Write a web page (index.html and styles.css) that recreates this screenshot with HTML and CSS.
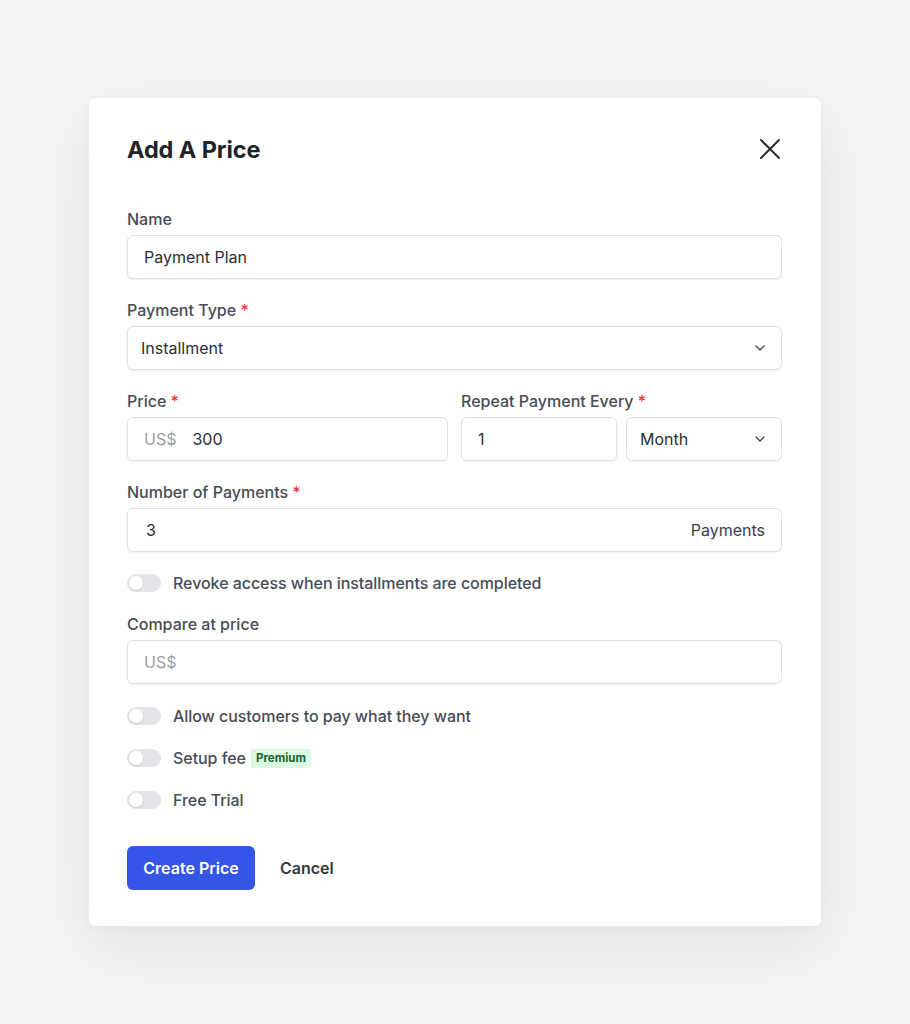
FILE: index.html
```html
<!DOCTYPE html>
<html>
<head>
<meta charset="utf-8">
<link rel="stylesheet" href="styles.css">
</head>
<body>
<div class="page">
  <div class="modal">
    <div class="header">
      <h1 class="title">Add A Price</h1>
      <svg class="close" width="22" height="22" viewBox="0 0 22 22"><path d="M2 2L20 20M20 2L2 20" stroke="#2b2e33" stroke-width="2" stroke-linecap="round"/></svg>
    </div>

    <div class="form">
      <div class="field">
        <label class="label">Name</label>
        <div class="input"><span class="value">Payment Plan</span></div>
      </div>

      <div class="field">
        <label class="label">Payment Type <span class="req">*</span></label>
        <div class="input select"><span class="value sel">Installment</span>
          <svg class="chev" width="10" height="6" viewBox="0 0 10 6"><path d="M1 1L5 5L9 1" fill="none" stroke="#444" stroke-width="1.4" stroke-linecap="round" stroke-linejoin="round"/></svg>
        </div>
      </div>

      <div class="two">
        <div class="field">
          <label class="label">Price <span class="req">*</span></label>
          <div class="input"><span class="prefix">US$</span><span class="value">300</span></div>
        </div>
        <div class="field">
          <label class="label">Repeat Payment Every <span class="req">*</span></label>
          <div class="pair">
            <div class="input"><span class="value">1</span></div>
            <div class="input select"><span class="value sel">Month</span>
              <svg class="chev" width="10" height="6" viewBox="0 0 10 6"><path d="M1 1L5 5L9 1" fill="none" stroke="#444" stroke-width="1.4" stroke-linecap="round" stroke-linejoin="round"/></svg>
            </div>
          </div>
        </div>
      </div>

      <div class="field">
        <label class="label">Number of Payments <span class="req">*</span></label>
        <div class="input spread"><span class="value num">3</span><span class="suffix">Payments</span></div>
      </div>

      <div class="toggle-row first"><span class="toggle"><span class="knob"></span></span><span class="tlabel">Revoke access when installments are completed</span></div>

      <div class="field compare">
        <label class="label">Compare at price</label>
        <div class="input"><span class="prefix">US$</span></div>
      </div>

      <div class="toggles">
        <div class="toggle-row"><span class="toggle"><span class="knob"></span></span><span class="tlabel">Allow customers to pay what they want</span></div>
        <div class="toggle-row"><span class="toggle"><span class="knob"></span></span><span class="tlabel">Setup fee</span><span class="badge">Premium</span></div>
        <div class="toggle-row"><span class="toggle"><span class="knob"></span></span><span class="tlabel">Free Trial</span></div>
      </div>

      <div class="actions">
        <button class="btn primary">Create Price</button>
        <button class="btn ghost">Cancel</button>
      </div>
    </div>
  </div>
</div>
</body>
</html>
```

FILE: styles.css
```css
* { box-sizing: border-box; }
html, body { margin: 0; padding: 0; }
body {
  background: #f3f4f3;
  font-family: Inter, "Noto Sans", "Liberation Sans", sans-serif;
  width: 910px;
  height: 1024px;
  overflow: hidden;
}
.page {
  padding-top: 98px;
  padding-left: 89px;
}
.modal {
  width: 732px;
  height: 828px;
  background: #ffffff;
  border-radius: 6px;
  box-shadow: 0 20px 70px rgba(0, 0, 0, 0.07), 0 2px 8px rgba(0,0,0,0.03);
  padding: 36px 39px 36px 38px;
}
.header {
  display: flex;
  justify-content: space-between;
  align-items: center;
  height: 32px;
}
.title {
  margin: 0;
  font-size: 23.5px;
  font-weight: 700;
  color: #202328;
  letter-spacing: -0.1px;
  line-height: 32px;
}
.close { margin-right: 1px; margin-top: -3px; }
.form {
  margin-top: 41px;
  display: flex;
  flex-direction: column;
}
.field { display: flex; flex-direction: column; margin-bottom: 19px; }
.label {
  font-size: 16px;
  font-weight: 500;
  color: #474c55;
  line-height: 24px;
  margin-bottom: 4px;
}
.req { color: #e5393a; }
.input {
  height: 44px;
  border: 1px solid #dfe1e4;
  border-radius: 6px;
  box-shadow: 0 1px 2px rgba(0,0,0,0.06);
  display: flex;
  align-items: center;
  padding: 0 16px;
  font-size: 16px;
  color: #2b2f35;
  background: #fff;
}
.value { color: #2b2f35; }
.value.sel { margin-left: -3px; }
.select { justify-content: space-between; padding-right: 16px; }
.prefix { color: #9a9ea5; margin-right: 16px; }
.two {
  display: grid;
  grid-template-columns: 1fr 1fr;
  column-gap: 13px;
}
.pair { display: grid; grid-template-columns: 1fr 1fr; column-gap: 9px; }
.spread { justify-content: space-between; }
.num { margin-left: 2px; }
.suffix { color: #3a3e45; }
.toggle-row {
  display: flex;
  align-items: center;
  height: 24px;
}
.toggle-row.first { margin-top: 0; margin-bottom: 17px; }
.toggle {
  width: 34px;
  height: 18px;
  border-radius: 9px;
  background: #e3e5e9;
  position: relative;
  flex: none;
  margin-right: 12px;
}
.knob {
  position: absolute;
  left: 2px;
  top: 2px;
  width: 14px;
  height: 14px;
  border-radius: 50%;
  background: #fff;
  box-shadow: 0 1px 2px rgba(0,0,0,0.12);
}
.tlabel {
  font-size: 16px;
  font-weight: 500;
  color: #474c55;
  letter-spacing: -0.05px;
}
.compare { margin-bottom: 20px; }
.toggles { display: flex; flex-direction: column; gap: 18px; }
.badge {
  margin-left: 5px;
  background: #dcf9e3;
  color: #17652f;
  font-size: 11.5px;
  font-weight: 700;
  padding: 0 5px;
  height: 19px;
  line-height: 19px;
  border-radius: 2px;
}
.actions {
  margin-top: 34px;
  display: flex;
  align-items: center;
}
.btn {
  font-family: inherit;
  font-size: 16px;
  font-weight: 600;
  border: none;
  cursor: pointer;
}
.primary {
  background: #3455e6;
  color: #fff;
  height: 44px;
  width: 128px;
  border-radius: 6px;
}
.ghost {
  background: transparent;
  color: #34383e;
  padding: 0 0 0 25px;
}
```
